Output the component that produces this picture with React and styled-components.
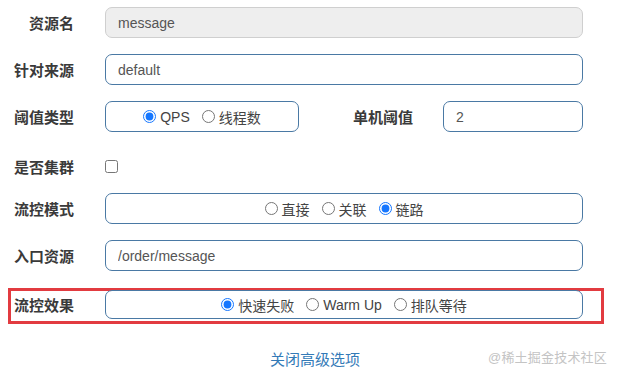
import React from 'react';
import styled, { createGlobalStyle } from 'styled-components';

const GlobalStyle = createGlobalStyle`
  html, body {
    margin: 0;
    padding: 0;
    background: #fff;
  }
  body {
    font-family: "Liberation Sans", "Noto Sans CJK SC", sans-serif;
    color: #333;
  }
`;

const Page = styled.div`
  position: relative;
  width: 619px;
  height: 377px;
  padding-top: 7px;
  box-sizing: border-box;
  overflow: hidden;
`;

const Row = styled.div`
  box-sizing: border-box;
  display: grid;
  grid-template-columns: 74px 1fr;
  column-gap: 31px;
  align-items: center;
  padding-right: 36px;
  height: ${(p) => p.$h || 31}px;
  padding-top: ${(p) => p.$pt || 0}px;
  margin-bottom: ${(p) => (p.$last ? 0 : 16)}px;
`;

const Highlight = styled.div`
  margin: 17px 15px 0 8px;
  border: 3px solid #e23b40;
  padding-bottom: 3px;
`;

const HighlightRow = styled(Row)`
  grid-template-columns: 63px 1fr;
  padding-right: 18px;
  height: 28px;
  margin-bottom: 0;
  margin-top: -1px;
`;

const Label = styled.label`
  text-align: right;
  font-size: 15px;
  font-weight: bold;
  color: #3a3a3a;
  white-space: nowrap;
`;

const Input = styled.input`
  box-sizing: border-box;
  width: ${(p) => (p.$w ? `${p.$w}px` : '100%')};
  height: 31px;
  padding: 0 12px;
  border: 1px solid ${(p) => (p.disabled ? '#cfcfcf' : '#4a79a4')};
  border-radius: 7px;
  background: ${(p) => (p.disabled ? '#eeeeee' : '#fff')};
  color: #555;
  font-family: "Liberation Sans", "Noto Sans CJK SC", sans-serif;
  font-size: 14px;
  outline: none;
`;

const RadioBox = styled.div`
  box-sizing: border-box;
  width: ${(p) => (p.$w ? `${p.$w}px` : '100%')};
  height: ${(p) => p.$h || 31}px;
  display: flex;
  align-items: center;
  justify-content: center;
  border: 1px solid #4a79a4;
  border-radius: 7px;
  font-size: 14px;
  color: #444;
`;

const RadioLabel = styled.label`
  display: inline-flex;
  align-items: center;
  gap: 4px;
  margin: 0 6px;
  white-space: nowrap;

  input {
    margin: 0;
    width: 13px;
    height: 13px;
    accent-color: #1677ff;
  }
`;

const SplitControls = styled.div`
  display: flex;
  align-items: center;
`;

const SideLabel = styled(Label)`
  flex: 1;
  margin-right: 30px;
`;

const Checkbox = styled.input`
  display: block;
  margin: 0;
  width: 13px;
  height: 13px;
`;

const Footer = styled.div`
  display: flex;
  justify-content: center;
  padding-left: 11px;
  margin-top: 26px;
`;

const ToggleLink = styled.a`
  font-size: 15px;
  line-height: 20px;
  color: #337ab7;
  text-decoration: none;
  cursor: pointer;
`;

const Watermark = styled.div`
  position: absolute;
  right: 12px;
  bottom: 11px;
  font-size: 13px;
  color: #c4c4c4;
  letter-spacing: 0.2px;
`;

const Radio = ({ name, label, checked }) => (
  <RadioLabel>
    <input type="radio" name={name} defaultChecked={checked} />
    {label}
  </RadioLabel>
);

export default function App() {
  return (
    <Page>
      <GlobalStyle />
      <Row>
        <Label>资源名</Label>
        <Input disabled defaultValue="message" />
      </Row>
      <Row>
        <Label>针对来源</Label>
        <Input defaultValue="default" />
      </Row>
      <Row>
        <Label>阈值类型</Label>
        <SplitControls>
          <RadioBox $w={194}>
            <Radio name="grade" label="QPS" checked />
            <Radio name="grade" label="线程数" />
          </RadioBox>
          <SideLabel>单机阈值</SideLabel>
          <Input $w={140} defaultValue="2" />
        </SplitControls>
      </Row>
      <Row $h={29} $pt={7}>
        <Label>是否集群</Label>
        <div>
          <Checkbox type="checkbox" />
        </div>
      </Row>
      <Row>
        <Label>流控模式</Label>
        <RadioBox>
          <Radio name="strategy" label="直接" />
          <Radio name="strategy" label="关联" />
          <Radio name="strategy" label="链路" checked />
        </RadioBox>
      </Row>
      <Row $last>
        <Label>入口资源</Label>
        <Input defaultValue="/order/message" />
      </Row>
      <Highlight>
        <HighlightRow>
          <Label>流控效果</Label>
          <RadioBox $h={29}>
            <Radio name="behavior" label="快速失败" checked />
            <Radio name="behavior" label="Warm Up" />
            <Radio name="behavior" label="排队等待" />
          </RadioBox>
        </HighlightRow>
      </Highlight>
      <Footer>
        <ToggleLink>关闭高级选项</ToggleLink>
      </Footer>
      <Watermark>@稀土掘金技术社区</Watermark>
    </Page>
  );
}
